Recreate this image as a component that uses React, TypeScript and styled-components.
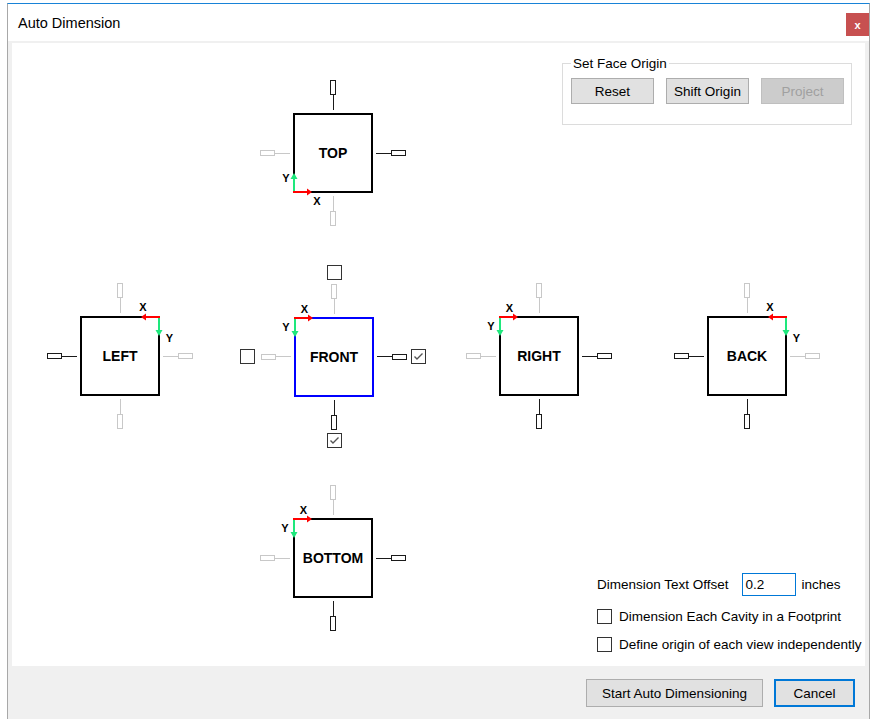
import React from 'react';
import styled, { createGlobalStyle } from 'styled-components';

const Global = createGlobalStyle`
  html, body { margin: 0; padding: 0; background: #ffffff; }
  body { font-family: "Liberation Sans", Arial, sans-serif; color: #000; }
  * { box-sizing: border-box; }
`;

const Window = styled.div`
  margin: 3px 0 0 7px;
  width: 863px;
  height: 716px;
  border-top: 1px solid #1883d7;
  border-left: 1px solid #a8a8a8;
  border-right: 1px solid #a8a8a8;
  display: flex;
  flex-direction: column;
  background: #ffffff;
`;

const TitleBar = styled.div`
  height: 37px;
  display: flex;
  align-items: center;
  padding-left: 10px;
  background: #ffffff;
`;

const Title = styled.div`
  flex: 1;
  font-size: 14.5px;
  color: #000;
`;

const CloseButton = styled.div`
  align-self: flex-start;
  margin-top: 9px;
  width: 23px;
  height: 23px;
  background: #c75050;
  color: #fff;
  font-size: 11px;
  font-weight: bold;
  display: flex;
  align-items: center;
  justify-content: center;
`;

const Body = styled.div`
  flex: 1;
  background: #f0f0f0;
  padding: 2px 4px 0 4px;
  display: flex;
  flex-direction: column;
`;

const Panel = styled.div`
  height: 623px;
  background: #ffffff;
  padding: 13px 0 0 8px;
`;

const Diagram = styled.div`
  display: grid;
  grid-template-columns: 200px 226px 186px 230px;
  grid-template-rows: 194px 212px 192px;
  align-items: center;
  justify-items: center;
`;

const Cell = styled.div<{ $col: string; $row: number }>`
  grid-column: ${p => p.$col};
  grid-row: ${p => p.$row};
`;

const ViewGrid = styled.div`
  display: grid;
  grid-template-columns: auto auto 80px auto auto;
  grid-template-rows: auto auto 80px auto auto;
  grid-template-areas:
    ". . tc . ."
    ". . ts . ."
    "lc ls box rs rc"
    ". . bs . ."
    ". . bc . .";
  align-items: center;
  justify-items: center;
`;

const Slot = styled.div<{ $area: string; $pad?: string }>`
  grid-area: ${p => p.$area};
  display: flex;
  padding: ${p => p.$pad || '0'};
`;

type Dir = 'top' | 'bottom' | 'left' | 'right';

const flowFor: Record<Dir, string> = {
  top: 'flex-direction: column; padding-bottom: 3px;',
  bottom: 'flex-direction: column-reverse; padding-top: 3px;',
  left: 'flex-direction: row; padding-right: 3px;',
  right: 'flex-direction: row-reverse; padding-left: 3px;',
};

const StubWrap = styled.div<{ $dir: Dir }>`
  display: flex;
  align-items: center;
  ${p => flowFor[p.$dir]}
`;

const StubRect = styled.div<{ $vertical: boolean; $on: boolean }>`
  width: ${p => (p.$vertical ? 6 : 15)}px;
  height: ${p => (p.$vertical ? 15 : 6)}px;
  border: 1px solid ${p => (p.$on ? '#1a1a1a' : '#c8c8c8')};
  background: #fff;
`;

const StubLine = styled.div<{ $vertical: boolean; $on: boolean }>`
  width: ${p => (p.$vertical ? 1 : 15)}px;
  height: ${p => (p.$vertical ? 15 : 1)}px;
  background: ${p => (p.$on ? '#1a1a1a' : '#c8c8c8')};
`;

const Stub: React.FC<{ dir: Dir; on: boolean }> = ({ dir, on }) => {
  const v = dir === 'top' || dir === 'bottom';
  return (
    <StubWrap $dir={dir}>
      <StubRect $vertical={v} $on={on} />
      <StubLine $vertical={v} $on={on} />
    </StubWrap>
  );
};

const FaceBox = styled.div<{ $selected?: boolean }>`
  position: relative;
  width: 80px;
  height: 80px;
  border: 2px solid ${p => (p.$selected ? '#0000ff' : '#000')};
  display: flex;
  align-items: center;
  justify-content: center;
  font-size: 14px;
  font-weight: bold;
  color: #000;
  background: #fff;
`;

const AxisSvg = styled.svg`
  position: absolute;
  left: -22px;
  top: -22px;
  width: 124px;
  height: 124px;
  overflow: visible;
  pointer-events: none;
  font-family: "Liberation Sans", Arial, sans-serif;
  font-weight: bold;
  font-size: 11px;
`;

type Corner = 'tl' | 'tr' | 'bl';
const RED = '#ff0000';
const GREEN = '#1ee87c';

const Axis: React.FC<{ corner: Corner }> = ({ corner }) => {
  let content: React.ReactNode = null;
  if (corner === 'tl') {
    content = (
      <>
        <line x1={1} y1={1} x2={1} y2={15} stroke={GREEN} strokeWidth={2} />
        <polygon points="-2.5,14 1,20 4.5,14" fill={GREEN} />
        <line x1={0} y1={1} x2={14} y2={1} stroke={RED} strokeWidth={2} />
        <polygon points="14,-2.5 19,1 14,4.5" fill={RED} />
        <text x={10.5} y={-4} textAnchor="middle">X</text>
        <text x={-8} y={14} textAnchor="middle">Y</text>
      </>
    );
  } else if (corner === 'tr') {
    content = (
      <>
        <line x1={79} y1={1} x2={79} y2={15} stroke={GREEN} strokeWidth={2} />
        <polygon points="75.5,14 79,20 82.5,14" fill={GREEN} />
        <line x1={80} y1={1} x2={66} y2={1} stroke={RED} strokeWidth={2} />
        <polygon points="66,-2.5 61,1 66,4.5" fill={RED} />
        <text x={63} y={-5} textAnchor="middle">X</text>
        <text x={89.5} y={26} textAnchor="middle">Y</text>
      </>
    );
  } else {
    content = (
      <>
        <line x1={1} y1={79} x2={1} y2={65} stroke={GREEN} strokeWidth={2} />
        <polygon points="-2.5,66 1,60 4.5,66" fill={GREEN} />
        <line x1={0} y1={79} x2={14} y2={79} stroke={RED} strokeWidth={2} />
        <polygon points="14,75.5 19,79 14,82.5" fill={RED} />
        <text x={24} y={92} textAnchor="middle">X</text>
        <text x={-7} y={69} textAnchor="middle">Y</text>
      </>
    );
  }
  return (
    <AxisSvg viewBox="0 0 124 124">
      <g transform="translate(20,20)">{content}</g>
    </AxisSvg>
  );
};

const CheckBoxBox = styled.div`
  width: 15px;
  height: 15px;
  border: 1px solid #333;
  background: #fff;
  display: flex;
  align-items: center;
  justify-content: center;
  flex: none;
`;

const CheckBox: React.FC<{ checked?: boolean }> = ({ checked }) => (
  <CheckBoxBox>
    {checked && (
      <svg width="13" height="13" viewBox="0 0 13 13">
        <polyline points="2.5,6.5 5,9 10.5,3.5" fill="none" stroke="#555" strokeWidth="1.4" />
      </svg>
    )}
  </CheckBoxBox>
);

type ViewProps = {
  label: string;
  corner: Corner;
  on: { top: boolean; right: boolean; bottom: boolean; left: boolean };
  selected?: boolean;
  checks?: { top: boolean; right: boolean; bottom: boolean; left: boolean };
};

const FaceView: React.FC<ViewProps> = ({ label, corner, on, selected, checks }) => (
  <ViewGrid>
    {checks && (
      <>
        <Slot $area="tc" $pad="0 0 4px 0"><CheckBox checked={checks.top} /></Slot>
        <Slot $area="lc" $pad="0 6px 0 0"><CheckBox checked={checks.left} /></Slot>
        <Slot $area="rc" $pad="0 0 0 4px"><CheckBox checked={checks.right} /></Slot>
        <Slot $area="bc" $pad="3px 0 0 0"><CheckBox checked={checks.bottom} /></Slot>
      </>
    )}
    <Slot $area="ts"><Stub dir="top" on={on.top} /></Slot>
    <Slot $area="ls"><Stub dir="left" on={on.left} /></Slot>
    <Slot $area="rs"><Stub dir="right" on={on.right} /></Slot>
    <Slot $area="bs"><Stub dir="bottom" on={on.bottom} /></Slot>
    <Slot $area="box">
      <FaceBox $selected={selected}>
        {label}
        <Axis corner={corner} />
      </FaceBox>
    </Slot>
  </ViewGrid>
);

const Group = styled.fieldset`
  grid-column: 3 / span 2;
  grid-row: 1;
  justify-self: end;
  align-self: start;
  margin: 0 10px 0 0;
  width: 290px;
  min-inline-size: 0;
  height: 69px;
  border: 1px solid #dcdcdc;
  padding: 7px 6px 0 8px;
  display: flex;
  gap: 12px;
  align-items: flex-start;
`;

const Legend = styled.legend`
  padding: 0 2px;
  font-size: 13.5px;
  line-height: 15px;
  color: #000;
`;

const Button = styled.button<{ $w: number; $h: number; $default?: boolean }>`
  width: ${p => p.$w}px;
  height: ${p => p.$h}px;
  background: ${p => (p.disabled ? '#cccccc' : '#e1e1e1')};
  border: ${p => (p.$default ? '2px solid #0078d7' : p.disabled ? '1px solid #bfbfbf' : '1px solid #adadad')};
  color: ${p => (p.disabled ? '#a0a0a0' : '#000')};
  font-family: "Liberation Sans", Arial, sans-serif;
  font-size: 13.5px;
  padding: 0;
  border-radius: 0;
  flex: none;
`;

const Options = styled.div`
  grid-column: 3 / span 2;
  grid-row: 3;
  justify-self: start;
  align-self: end;
  margin: 0 0 2px 151px;
  display: flex;
  flex-direction: column;
  gap: 12px;
  font-size: 13.5px;
`;

const OffsetRow = styled.div`
  display: flex;
  align-items: center;
  height: 24px;
`;

const OffsetInput = styled.div`
  margin-left: 13px;
  width: 54px;
  height: 23px;
  border: 1px solid #0078d7;
  padding-left: 3px;
  display: flex;
  align-items: center;
  font-size: 13.5px;
`;

const Unit = styled.span`
  margin-left: 6px;
`;

const CheckRow = styled.div`
  display: flex;
  align-items: center;
  gap: 7px;
  height: 16px;
`;

const Footer = styled.div`
  height: 53px;
  display: flex;
  justify-content: flex-end;
  align-items: flex-start;
  gap: 11px;
  padding: 13px 10px 0 0;
`;

const off = { top: false, right: false, bottom: false, left: false };

export default function App() {
  return (
    <>
      <Global />
      <Window>
        <TitleBar>
          <Title>Auto Dimension</Title>
          <CloseButton>x</CloseButton>
        </TitleBar>
        <Body>
          <Panel>
            <Diagram>
              <Cell $col="2" $row={1}>
                <FaceView label="TOP" corner="bl" on={{ ...off, top: true, right: true }} />
              </Cell>
              <Group>
                <Legend>Set Face Origin</Legend>
                <Button $w={83} $h={26}>Reset</Button>
                <Button $w={83} $h={26}>Shift Origin</Button>
                <Button $w={83} $h={26} disabled>Project</Button>
              </Group>
              <Cell $col="1" $row={2}>
                <FaceView label="LEFT" corner="tr" on={{ ...off, left: true }} />
              </Cell>
              <Cell $col="2" $row={2}>
                <FaceView
                  label="FRONT"
                  corner="tl"
                  selected
                  on={{ ...off, right: true, bottom: true }}
                  checks={{ top: false, left: false, right: true, bottom: true }}
                />
              </Cell>
              <Cell $col="3" $row={2}>
                <FaceView label="RIGHT" corner="tl" on={{ ...off, right: true, bottom: true }} />
              </Cell>
              <Cell $col="4" $row={2}>
                <FaceView label="BACK" corner="tr" on={{ ...off, left: true, bottom: true }} />
              </Cell>
              <Cell $col="2" $row={3}>
                <FaceView label="BOTTOM" corner="tl" on={{ ...off, right: true, bottom: true }} />
              </Cell>
              <Options>
                <OffsetRow>
                  <span>Dimension Text Offset</span>
                  <OffsetInput>0.2</OffsetInput>
                  <Unit>inches</Unit>
                </OffsetRow>
                <CheckRow>
                  <CheckBox />
                  <span>Dimension Each Cavity in a Footprint</span>
                </CheckRow>
                <CheckRow>
                  <CheckBox />
                  <span>Define origin of each view independently</span>
                </CheckRow>
              </Options>
            </Diagram>
          </Panel>
          <Footer>
            <Button $w={177} $h={28}>Start Auto Dimensioning</Button>
            <Button $w={81} $h={28} $default>Cancel</Button>
          </Footer>
        </Body>
      </Window>
    </>
  );
}
